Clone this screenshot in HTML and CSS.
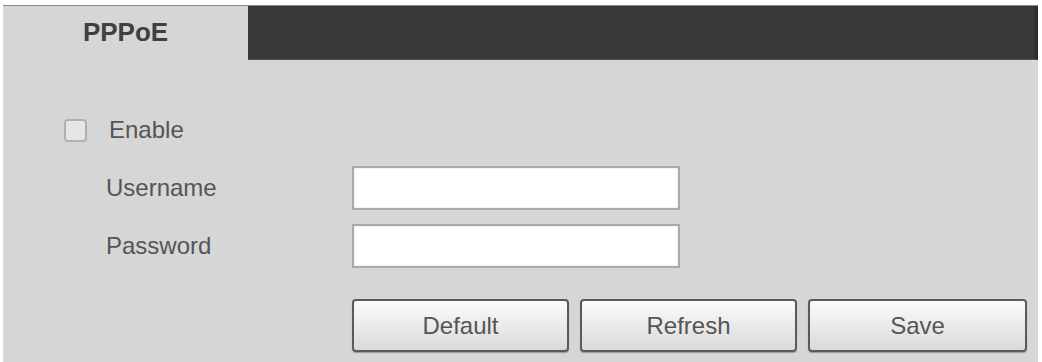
FILE: index.html
```html
<!DOCTYPE html>
<html lang="en">
<head>
  <meta charset="UTF-8">
  <title>PPPoE</title>
  <link rel="stylesheet" href="styles.css">
</head>
<body>
  <div class="panel">
    <div class="tabs">
      <div class="tab">PPPoE</div>
      <div class="tab-fill"></div>
    </div>

    <div class="form">
      <label class="row check-row">
        <span class="checkbox"></span>
        <span>Enable</span>
      </label>

      <div class="row field">
        <label for="username">Username</label>
        <input type="text" id="username">
      </div>

      <div class="row field pass">
        <label for="password">Password</label>
        <input type="password" id="password">
      </div>

      <div class="buttons">
        <button class="btn">Default</button>
        <button class="btn">Refresh</button>
        <button class="btn save">Save</button>
      </div>
    </div>
  </div>
</body>
</html>
```

FILE: styles.css
```css
body {
  margin: 0;
  background: #fff;
  font-family: "Liberation Sans", Arial, sans-serif;
}
.panel {
  margin: 5px 4px 0 3px;
  height: 357px;
  background: #d6d6d6;
  border-top: 1px solid #8a8a8a;
  box-sizing: border-box;
}
.tabs {
  display: flex;
  height: 54px;
}
.tab {
  width: 245px;
  text-align: center;
  font-weight: bold;
  font-size: 26px;
  line-height: 52px;
  color: #404040;
}
.tab-fill {
  flex: 1;
  background: #383838;
  border-right: 3px solid #2c2c2c;
  border-bottom: 1px solid #555;
}
.form {
  padding-top: 55px;
  font-size: 24px;
  color: #555;
}
.row {
  display: flex;
  align-items: center;
}
.check-row {
  height: 30px;
  padding-left: 61px;
}
.checkbox {
  width: 19px;
  height: 19px;
  margin-right: 22px;
  border: 2px solid #b0b0b0;
  border-radius: 4px;
  background: #e6e6e6;
}
.field {
  margin-top: 21px;
  padding-left: 103px;
}
.field.pass {
  margin-top: 14px;
}
.field label {
  width: 246px;
}
.field input {
  width: 328px;
  height: 44px;
  box-sizing: border-box;
  margin: 0;
  border: 2px solid #a9a9a9;
  box-shadow: inset 0 0 2px #ccc;
  background: #fff;
}
.buttons {
  display: flex;
  gap: 11px;
  margin-top: 31px;
  padding-left: 349px;
}
.btn {
  width: 217px;
  height: 53px;
  font-family: "Liberation Sans", Arial, sans-serif;
  font-size: 24px;
  color: #555;
  border: 2px solid #5a5a5a;
  border-radius: 4px;
  background: linear-gradient(#fbfbfb, #e9e9e9 55%, #d9d9d9);
  box-shadow: 0 1px 1px rgba(0,0,0,0.3);
  padding: 0;
}
.btn.save {
  width: 219px;
}
```
